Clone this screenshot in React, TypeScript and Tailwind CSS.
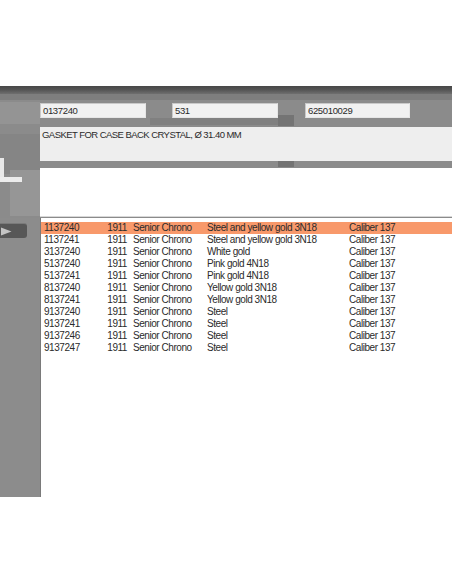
import React from "react";

type Row = { ref: string; year: string; model: string; material: string; movement: string };

const rows: Row[] = [
  { ref: "1137240", year: "1911", model: "Senior Chrono", material: "Steel and yellow gold 3N18", movement: "Caliber 137" },
  { ref: "1137241", year: "1911", model: "Senior Chrono", material: "Steel and yellow gold 3N18", movement: "Caliber 137" },
  { ref: "3137240", year: "1911", model: "Senior Chrono", material: "White gold", movement: "Caliber 137" },
  { ref: "5137240", year: "1911", model: "Senior Chrono", material: "Pink gold 4N18", movement: "Caliber 137" },
  { ref: "5137241", year: "1911", model: "Senior Chrono", material: "Pink gold 4N18", movement: "Caliber 137" },
  { ref: "8137240", year: "1911", model: "Senior Chrono", material: "Yellow gold 3N18", movement: "Caliber 137" },
  { ref: "8137241", year: "1911", model: "Senior Chrono", material: "Yellow gold 3N18", movement: "Caliber 137" },
  { ref: "9137240", year: "1911", model: "Senior Chrono", material: "Steel", movement: "Caliber 137" },
  { ref: "9137241", year: "1911", model: "Senior Chrono", material: "Steel", movement: "Caliber 137" },
  { ref: "9137246", year: "1911", model: "Senior Chrono", material: "Steel", movement: "Caliber 137" },
  { ref: "9137247", year: "1911", model: "Senior Chrono", material: "Steel", movement: "Caliber 137" },
];

function Field({ value, className }: { value: string; className: string }) {
  return (
    <div
      className={`h-[15px] bg-[#f1f1f1] border-t border-l border-[#c9c9c9] border-b border-r border-b-[#e6e6e6] border-r-[#e6e6e6] px-[2px] leading-[13px] text-[#2a2a2a] ${className}`}
    >
      {value}
    </div>
  );
}

export default function App() {
  return (
    <div className="w-[452px] h-[584px] bg-white flex flex-col font-['Liberation_Sans',Arial,sans-serif] overflow-hidden">
      <div className="h-[86px] shrink-0" />
      {/* title strip */}
      <div className="h-[8px] shrink-0 bg-gradient-to-b from-[#474747] via-[#555555] to-[#6f6f6f]" />

      {/* detail panel */}
      <div className="h-[124px] shrink-0 bg-[#8b8b8b] relative text-[9.5px] tracking-[-0.35px]">
        {/* background artwork */}
        <div className="absolute left-0 top-0 w-full h-[6px] bg-[#7e7e7e]" />
        <div className="absolute left-0 top-[8px] w-[40px] h-[22px] bg-[#949494]" />
        <div className="absolute left-[150px] top-[24px] w-[128px] h-[7px] bg-[#808080]" />
        <div className="absolute left-[278px] top-[21px] w-[16px] h-[11px] bg-[#747474]" />
        <div className="absolute left-[0px] top-[40px] w-[40px] h-[40px] bg-[#858585]" />
        <div className="absolute left-[10px] top-[76px] w-[30px] h-[46px] bg-[#969696]" />
        <div className="absolute left-[0px] top-[64px] w-[4px] h-[24px] bg-[#e8e8e8]" />
        <div className="absolute left-[0px] top-[83px] w-[22px] h-[5px] bg-[#ececec]" />
        <div className="absolute left-[278px] top-[67px] w-[16px] h-[6px] bg-[#737373]" />

        <div className="relative flex flex-col pl-[40px] pt-[9px]">
          <div className="flex">
            <Field value="0137240" className="w-[106px]" />
            <Field value="531" className="w-[106px] ml-[26px]" />
            <Field value="625010029" className="w-[105px] ml-[27px]" />
          </div>
          <div className="mt-[9px] h-[34px] bg-[#eeeeee] px-[2px] pt-[2px] leading-[11px] text-[#2a2a2a] tracking-[-0.55px]">
            GASKET FOR CASE BACK CRYSTAL, Ø 31.40 MM
          </div>
          <div className="h-[7px]" />
          <div className="h-[49px] bg-white border-b border-[#d8d8d8]" />
        </div>
      </div>

      {/* result list */}
      <div className="h-[279px] shrink-0 flex text-[10px] tracking-[-0.45px]">
        <div className="w-[41px] shrink-0 bg-[#8c8c8c] border-r border-[#7a7a7a] pt-[5px]">
          <div className="w-[27px] h-[15px] bg-[#575757] rounded-r-[3px] border-t border-[#7a7a7a] flex items-center pl-[1px]">
            <svg width="11" height="9" viewBox="0 0 11 9">
              <path d="M0 0.5 L10.5 4.5 L0 8.5 Z" fill="#c4c4c4" />
            </svg>
          </div>
        </div>
        <div className="flex-1 bg-white pt-[4px] text-[#2b2b2b]">
          {rows.map((r, i) => (
            <div
              key={r.ref}
              className={`h-[12px] leading-[12px] flex whitespace-nowrap ${i === 0 ? "bg-[#f8996b]" : ""}`}
            >
              <span className="w-[64px] pl-[3px]">{r.ref}</span>
              <span className="w-[22px] text-right">{r.year}</span>
              <span className="w-[80px] pl-[6px]">{r.model}</span>
              <span className="w-[142px]">{r.material}</span>
              <span>{r.movement}</span>
            </div>
          ))}
        </div>
      </div>
      <div className="flex-1" />
    </div>
  );
}
